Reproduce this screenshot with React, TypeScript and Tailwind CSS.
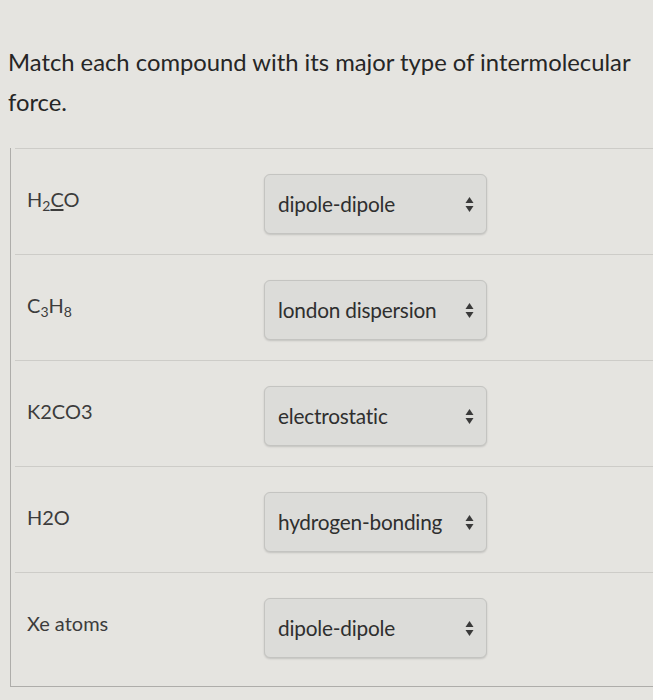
import React from "react";

interface Row {
  label: React.ReactNode;
  value: string;
}

const rows: Row[] = [
  {
    label: (
      <>
        H<sub className="text-[14px]">2</sub>
        <span className="underline underline-offset-2">C</span>O
      </>
    ),
    value: "dipole-dipole",
  },
  {
    label: (
      <>
        C<sub className="text-[14px]">3</sub>H<sub className="text-[14px]">8</sub>
      </>
    ),
    value: "london dispersion",
  },
  { label: "K2CO3", value: "electrostatic" },
  { label: "H2O", value: "hydrogen-bonding" },
  { label: "Xe atoms", value: "dipole-dipole" },
];

const Arrows = () => (
  <svg width="9" height="17" viewBox="0 0 9 17" className="text-[#3a3a3a]">
    <path d="M4.5 1 L8.5 7 L0.5 7 Z" fill="currentColor" />
    <path d="M4.5 16 L8.5 10 L0.5 10 Z" fill="currentColor" />
  </svg>
);

const Select: React.FC<{ value: string }> = ({ value }) => (
  <div className="flex items-center justify-between w-[223px] h-[60px] pl-[13px] pr-[12px] rounded-md border border-[#c4c4c1] bg-[#dcdcd9] shadow-[0_1px_2px_rgba(0,0,0,0.15)]">
    <span className="text-[20.8px] text-[#2f2f2f] tracking-[-0.2px]">{value}</span>
    <Arrows />
  </div>
);

export default function App() {
  return (
    <div className="min-h-[700px] w-[653px] bg-[#e5e4e0] font-['Lato','Open_Sans',sans-serif] text-[#2b2b2b]">
      <div className="pl-[8px] pt-[42px] pr-2 text-[23.8px] leading-[40px] text-[#262626] whitespace-nowrap">
        Match each compound with its major type of intermolecular
        <br />
        force.
      </div>
      <div className="ml-[10px] mt-[26px] h-[539px] border-l border-b border-[#aeadaa]">
        {rows.map((row, i) => (
          <div
            key={i}
            className="flex items-start ml-[4px] h-[106px] border-t border-[#cdccc8]"
          >
            <div className="w-[249px] pl-[12px] pt-[35px] text-[20px] text-[#3c3c3c]">
              {row.label}
            </div>
            <div className="pt-[25px]">
              <Select value={row.value} />
            </div>
          </div>
        ))}
      </div>
    </div>
  );
}
